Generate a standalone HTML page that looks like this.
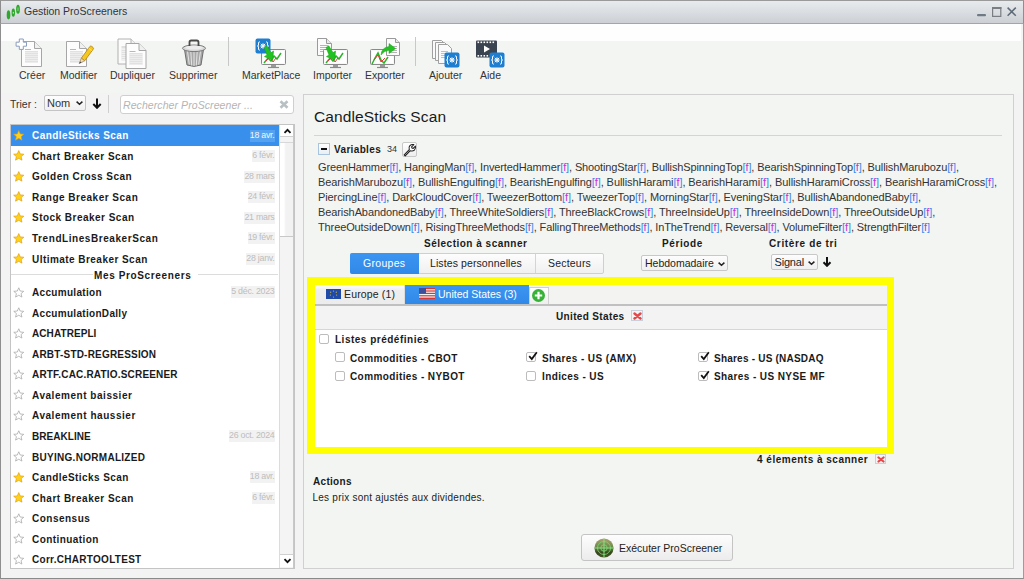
<!DOCTYPE html>
<html><head><meta charset="utf-8">
<style>
*{box-sizing:border-box;margin:0;padding:0}
html,body{width:1024px;height:579px;overflow:hidden;background:#f3f3f3;font-family:"Liberation Sans",sans-serif;color:#222}
.a{position:absolute}
.t{position:absolute;white-space:nowrap;line-height:1}
#win{position:absolute;left:0;top:0;width:1024px;height:579px;border-left:1px solid #8e8e8e;border-right:1px solid #9c9c9c;border-bottom:1px solid #8a8a8a;background:#f3f3f3}
#title{position:absolute;left:0;top:0;width:1024px;height:24px;background:linear-gradient(#e8ebee,#ccd0d4);border-top:1px solid #9a9a9a;border-bottom:1px solid #a3a6a9;border-left:1px solid #8e8e8e;border-right:1px solid #8e8e8e}
.tb{font-size:10.5px;color:#333}
.bo{font-weight:bold;letter-spacing:0.5px;font-size:10px;color:#1a1a1a}
.row{position:absolute;left:11px;width:269px;height:20.5px}
.row .n{position:absolute;left:21px;top:6.3px;font-size:10px;font-weight:bold;letter-spacing:0.4px;color:#1a1a1a;white-space:nowrap;line-height:1}
.row .d{position:absolute;right:5px;top:4.6px;height:12px;background:#f2f2f2;color:#bdbdbd;font-size:8.8px;letter-spacing:-0.25px;line-height:11.5px;padding:0 0.5px 0 0;white-space:nowrap}
.row svg{position:absolute;left:2px;top:4.8px}
.sel{background:#3990ec}
.sel .n{color:#fff}
.sel .d{background:#55a2f0;color:#f2f8fe}
.v{position:absolute;left:318px;font-size:11px;letter-spacing:-0.12px;color:#333;white-space:nowrap;line-height:1}
.f{color:#3a8af0}.f i{font-style:normal;color:#c830d8}
.cb{position:absolute;width:10px;height:10px;border:1px solid #bcbcbc;border-radius:2px;background:#fff}
.ck{position:absolute;left:1px;top:-2px}
</style></head><body>
<div id="win"></div>
<div id="title">
  <svg class="a" style="left:0px;top:0px" width="22" height="22" viewBox="0 0 22 22">
    <ellipse cx="7.5" cy="13.8" rx="1.8" ry="4.6" fill="#2ea82a"/>
    <ellipse cx="12.3" cy="11.6" rx="1.7" ry="4.2" fill="#2ea82a"/><ellipse cx="12.3" cy="11.8" rx="0.6" ry="1" fill="#cfe8cf"/>
    <ellipse cx="17" cy="8.2" rx="1.9" ry="4.5" fill="#2ea82a"/><rect x="16.4" y="6.5" width="1.2" height="3.5" fill="#7ccf7a"/>
  </svg>
  <div class="t" style="left:23px;top:4.9px;font-size:10.5px;color:#30343a">Gestion ProScreeners</div>
  <svg class="a" style="left:974px;top:4px" width="44" height="14" viewBox="0 0 44 14">
    <rect x="2" y="9" width="9" height="2.2" rx="1" fill="#6e7a86"/>
    <rect x="17.6" y="2.6" width="8.2" height="8.8" fill="none" stroke="#7a7e82" stroke-width="1.2"/><rect x="17" y="2" width="9.4" height="2" fill="#7a7e82"/>
    <path d="M32.6 2.6L40.8 10.8M40.8 2.6L32.6 10.8" stroke="#5e6a78" stroke-width="1.5"/>
  </svg>
</div>
<div class="a" style="left:1px;top:24px;width:1020px;height:17px;background:#fefefe"></div>
<div class="a" style="left:1px;top:41px;width:1022px;height:52px;background:#f3f5f2"></div>
<div class="t tb" style="left:19px;top:70px">Créer</div>
<div class="t tb" style="left:60px;top:70px">Modifier</div>
<div class="t tb" style="left:110px;top:70px">Dupliquer</div>
<div class="t tb" style="left:169px;top:70px">Supprimer</div>
<div class="t tb" style="left:242px;top:70px">MarketPlace</div>
<div class="t tb" style="left:313px;top:70px">Importer</div>
<div class="t tb" style="left:365px;top:70px">Exporter</div>
<div class="t tb" style="left:429px;top:70px">Ajouter</div>
<div class="t tb" style="left:480px;top:70px">Aide</div>
<div class="a" style="left:228px;top:37px;width:1px;height:29px;background:#c8c8c8"></div>
<div class="a" style="left:415px;top:37px;width:1px;height:29px;background:#c8c8c8"></div>
<svg class="a" style="left:0;top:30px" width="520" height="42" viewBox="0 30 520 42">
<defs>
 <g id="doc"><path d="M0.5 0.5H13.5L20.5 7.5V25.5H0.5Z" fill="#fdfdfd" stroke="#a6a6a6"/><path d="M13.5 0.5V7.5H20.5" fill="#f0f0f0" stroke="#a6a6a6"/>
  <rect x="4" y="10" width="13" height="12" fill="#d8d8d8"/><g stroke="#fff" stroke-width="0.8"><path d="M4 11.2H17M4 13.2H17M4 15.2H17M4 17.2H17M4 19.2H17M4 21.2H17"/></g><path d="M4 8.5H10" stroke="#b8b8b8"/></g>
 <g id="mon"><rect x="0.5" y="0.5" width="24" height="15" rx="1" fill="#f8f8f8" stroke="#8a8a8a"/><rect x="2" y="2" width="21" height="12" fill="#fff"/><path d="M10 16H15V18H10Z" fill="#9a9a9a"/><path d="M7 18.5H18" stroke="#8a8a8a" stroke-width="1.2"/></g>
 <g id="bx"><rect x="0" y="0" width="15" height="15" rx="2" fill="#1e7fd0"/><path d="M4.3 3.3Q3 3.3 3 4.5V6.5Q3 7.5 2 7.5Q3 7.5 3 8.5V10.5Q3 11.7 4.3 11.7M10.7 3.3Q12 3.3 12 4.5V6.5Q12 7.5 13 7.5Q12 7.5 12 8.5V10.5Q12 11.7 10.7 11.7" fill="none" stroke="#fff" stroke-width="1"/><circle cx="7.5" cy="7.5" r="2" fill="none" stroke="#fff" stroke-width="1"/><path d="M5.3 5.3L9.7 9.7M9.7 5.3L5.3 9.7" stroke="#fff" stroke-width="0.9"/></g>
</defs>
<!-- Creer -->
<use href="#doc" x="21" y="41"/>
<path d="M19.3 39H23.3V42.2H26.5V46.2H23.3V49.4H19.3V46.2H16.1V42.2H19.3Z" fill="#fff" stroke="#8a9cbc" stroke-width="1" stroke-linejoin="round"/>
<!-- Modifier -->
<use href="#doc" x="66" y="41"/>
<path d="M81.3 58.2L89.8 46.6Q90.6 45.6 91.7 46.4L93 47.4Q94 48.2 93.2 49.2L84.7 60.8Z" fill="#f6c81e" stroke="#b98a1e" stroke-width="0.9"/>
<path d="M88.6 48.2L91.9 50.6" stroke="#fbe27a" stroke-width="0.9"/>
<path d="M81.3 58.2L84.7 60.8L79.2 63.6Z" fill="#f3dcb0" stroke="#a08050" stroke-width="0.7" stroke-linejoin="round"/>
<path d="M79.2 63.6L80.2 61.6L81.3 62.4Z" fill="#333"/>
<!-- Dupliquer -->
<g opacity="0.85"><use href="#doc" x="117.5" y="38.5"/></g>
<use href="#doc" x="125.5" y="43"/>
<!-- Supprimer -->
<path d="M184.5 49.5L187 65Q194 67.8 201 65L203.5 49.5Z" fill="#a8a8a8" stroke="#6e6e6e"/>
<g stroke="#e4e4e4" stroke-width="1"><path d="M187.5 51L189.3 64.5M190.8 51.5L191.7 65.5M194 51.5V66M197.2 51.5L196.3 65.5M200.5 51L198.7 64.5"/></g>
<ellipse cx="194" cy="48.3" rx="11.5" ry="3.3" fill="#d8d8d8" stroke="#7a7a7a"/>
<ellipse cx="194" cy="47.6" rx="9" ry="2" fill="#ececec"/>
<path d="M189.5 46V42.2Q189.5 40.5 191.2 40.5H196.8Q198.5 40.5 198.5 42.2V46" fill="none" stroke="#4a4a4a" stroke-width="1.8"/>
<!-- MarketPlace -->
<use href="#mon" x="261" y="49"/>
<path d="M264 63L268 58L271 61L274 56L277 59L281 53" fill="none" stroke="#27b427" stroke-width="1.5"/>
<path d="M266 61L270 57L273 62L276 58" fill="none" stroke="#e03a3a" stroke-width="1"/>
<use href="#bx" x="255.5" y="38.5"/>
<path d="M264 47.5L266.8 45.8L271 52.6L273.6 51L272.6 60.2L264.4 56.6L267 55Z" fill="#22c222" stroke="#18a018" stroke-width="0.5"/>
<!-- Importer -->
<path d="M317.5 38.5H326.5L331.5 43.5V55.5H317.5Z" fill="#fbfbfb" stroke="#9a9a9a"/><path d="M326.5 38.5V43.5H331.5" fill="#e8e8e8" stroke="#9a9a9a"/>
<g stroke="#b4b4b4"><path d="M320 45.5H328M320 47.5H328M320 49.5H328M320 51.5H328"/></g>
<use href="#mon" x="323" y="49"/>
<path d="M326 63L330 58L333 61L336 56L339 59L343 53" fill="none" stroke="#27b427" stroke-width="1.5"/>
<path d="M328 61L332 57L335 62L338 58" fill="none" stroke="#e03a3a" stroke-width="1"/>
<path d="M326 47.5L328.8 45.8L333 52.6L335.6 51L334.6 60.2L326.4 56.6L329 55Z" fill="#22c222" stroke="#18a018" stroke-width="0.5"/>
<!-- Exporter -->
<use href="#mon" x="370" y="49"/>
<path d="M372 64L375 58L378 53L381 60L384 63L388 57" fill="none" stroke="#27b427" stroke-width="1.5"/>
<path d="M374 60L378 55L381 62L385 58" fill="none" stroke="#e03a3a" stroke-width="1"/>
<path d="M386.5 38.5H395.5L399.5 42.5V55.5H386.5Z" fill="#fbfbfb" stroke="#9a9a9a"/><path d="M395.5 38.5V42.5H399.5" fill="#e8e8e8" stroke="#9a9a9a"/>
<g stroke="#b4b4b4"><path d="M389 46.5H397M389 48.5H397M389 50.5H397M389 52.5H397"/></g>
<path d="M381 55Q381.5 47.5 389 46.5V43.5L395.5 48.5L389 53.5V50.2Q384.5 50.5 381 55Z" fill="#22c222" stroke="#18a018" stroke-width="0.5"/>
<!-- Ajouter -->
<path d="M432.5 40.5H441.5L444.5 43.5V58.5H432.5Z" fill="#fafafa" stroke="#a0a0a0"/>
<path d="M435.5 42.5H444.5L447.5 45.5V60.5H435.5Z" fill="#fafafa" stroke="#a0a0a0"/>
<path d="M438.5 44.5H447.5L451.5 48.5V63.5H438.5Z" fill="#fafafa" stroke="#a0a0a0"/>
<g stroke="#c0c0c0"><path d="M441 51.5H448M441 53.5H448M441 55.5H448M441 57.5H448"/></g>
<use href="#bx" x="444.5" y="52.5"/>
<!-- Aide -->
<rect x="476" y="40.5" width="21" height="17" rx="1" fill="#394450"/>
<g fill="#fff"><rect x="477.5" y="41.5" width="1.6" height="1.6"/><rect x="480.5" y="41.5" width="1.6" height="1.6"/><rect x="483.5" y="41.5" width="1.6" height="1.6"/><rect x="486.5" y="41.5" width="1.6" height="1.6"/><rect x="489.5" y="41.5" width="1.6" height="1.6"/><rect x="492.5" y="41.5" width="1.6" height="1.6"/>
<rect x="477.5" y="55" width="1.6" height="1.6"/><rect x="480.5" y="55" width="1.6" height="1.6"/><rect x="483.5" y="55" width="1.6" height="1.6"/><rect x="486.5" y="55" width="1.6" height="1.6"/></g>
<path d="M484 45.5V52.5L490 49Z" fill="#fff"/>
<use href="#bx" x="489.5" y="52.5"/>
</svg>
<div class="t" style="left:10px;top:99px;font-size:10.5px;color:#333">Trier :</div>
<div class="a" style="left:44px;top:95px;width:42px;height:16px;border:1px solid #c4c4c4;border-radius:2px;background:linear-gradient(#fdfdfd,#f0f0f0)"></div>
<div class="t" style="left:47px;top:98px;font-size:11px;color:#333">Nom</div>
<svg class="a" style="left:75px;top:100px" width="9" height="6" viewBox="0 0 9 6"><path d="M1.6 1.6L4.5 4.3L7.4 1.6" fill="none" stroke="#222" stroke-width="1.5"/></svg>
<svg class="a" style="left:92px;top:98px" width="10" height="11" viewBox="0 0 10 11"><path d="M5 0.5V9.5M1.3 6L5 9.8L8.7 6" fill="none" stroke="#111" stroke-width="2"/></svg>
<div class="a" style="left:108px;top:95px;width:1px;height:18px;background:#cfcfcf"></div>
<div class="a" style="left:120px;top:95px;width:174px;height:19px;border:1px solid #cfcfcf;border-radius:3px;background:#fff"></div>
<div class="t" style="left:123px;top:99.5px;font-size:10.5px;letter-spacing:0.08px;font-style:italic;color:#b4b4b4">Rechercher ProScreener ...</div>
<svg class="a" style="left:279px;top:100px" width="10" height="9" viewBox="0 0 10 9"><path d="M1.5 1.2L8.5 7.8M8.5 1.2L1.5 7.8" stroke="#b8c0c4" stroke-width="2.6"/></svg>
<div class="a" style="left:10px;top:124px;width:285px;height:445px;border:1px solid #c4c4c4;background:#fff;overflow:hidden"></div>
<div class="row sel" style="top:125.00px"><svg width="11.5" height="11.5" viewBox="0 0 12 12"><path d="M6 0.6L7.55 4.1L11.3 4.4L8.5 6.9L9.35 10.6L6 8.7L2.65 10.6L3.5 6.9L0.7 4.4L4.45 4.1Z" fill="#ffd21a" stroke="#e09a10" stroke-width="0.7" stroke-linejoin="round"/></svg><div class="n" style="letter-spacing:0.437px">CandleSticks Scan</div><div class="d">18 avr.</div></div>
<div class="row" style="top:145.55px"><svg width="11.5" height="11.5" viewBox="0 0 12 12"><path d="M6 0.6L7.55 4.1L11.3 4.4L8.5 6.9L9.35 10.6L6 8.7L2.65 10.6L3.5 6.9L0.7 4.4L4.45 4.1Z" fill="#ffd21a" stroke="#e09a10" stroke-width="0.7" stroke-linejoin="round"/></svg><div class="n" style="letter-spacing:0.500px">Chart Breaker Scan</div><div class="d">6 févr.</div></div>
<div class="row" style="top:166.10px"><svg width="11.5" height="11.5" viewBox="0 0 12 12"><path d="M6 0.6L7.55 4.1L11.3 4.4L8.5 6.9L9.35 10.6L6 8.7L2.65 10.6L3.5 6.9L0.7 4.4L4.45 4.1Z" fill="#ffd21a" stroke="#e09a10" stroke-width="0.7" stroke-linejoin="round"/></svg><div class="n" style="letter-spacing:0.463px">Golden Cross Scan</div><div class="d">28 mars</div></div>
<div class="row" style="top:186.65px"><svg width="11.5" height="11.5" viewBox="0 0 12 12"><path d="M6 0.6L7.55 4.1L11.3 4.4L8.5 6.9L9.35 10.6L6 8.7L2.65 10.6L3.5 6.9L0.7 4.4L4.45 4.1Z" fill="#ffd21a" stroke="#e09a10" stroke-width="0.7" stroke-linejoin="round"/></svg><div class="n" style="letter-spacing:0.500px">Range Breaker Scan</div><div class="d">24 févr.</div></div>
<div class="row" style="top:207.20px"><svg width="11.5" height="11.5" viewBox="0 0 12 12"><path d="M6 0.6L7.55 4.1L11.3 4.4L8.5 6.9L9.35 10.6L6 8.7L2.65 10.6L3.5 6.9L0.7 4.4L4.45 4.1Z" fill="#ffd21a" stroke="#e09a10" stroke-width="0.7" stroke-linejoin="round"/></svg><div class="n" style="letter-spacing:0.476px">Stock Breaker Scan</div><div class="d">21 mars</div></div>
<div class="row" style="top:227.75px"><svg width="11.5" height="11.5" viewBox="0 0 12 12"><path d="M6 0.6L7.55 4.1L11.3 4.4L8.5 6.9L9.35 10.6L6 8.7L2.65 10.6L3.5 6.9L0.7 4.4L4.45 4.1Z" fill="#ffd21a" stroke="#e09a10" stroke-width="0.7" stroke-linejoin="round"/></svg><div class="n" style="letter-spacing:0.565px">TrendLinesBreakerScan</div><div class="d">19 févr.</div></div>
<div class="row" style="top:248.30px"><svg width="11.5" height="11.5" viewBox="0 0 12 12"><path d="M6 0.6L7.55 4.1L11.3 4.4L8.5 6.9L9.35 10.6L6 8.7L2.65 10.6L3.5 6.9L0.7 4.4L4.45 4.1Z" fill="#ffd21a" stroke="#e09a10" stroke-width="0.7" stroke-linejoin="round"/></svg><div class="n" style="letter-spacing:0.455px">Ultimate Breaker Scan</div><div class="d">28 janv.</div></div>
<div class="a" style="left:11px;top:273.85px;width:82px;height:1px;background:#dcdcdc"></div><div class="a" style="left:198px;top:273.85px;width:80px;height:1px;background:#dcdcdc"></div><div class="t bo" style="left:94px;top:271.35px;letter-spacing:0.63px">Mes ProScreeners</div>
<div class="row" style="top:281.85px"><svg width="11.5" height="11.5" viewBox="0 0 12 12"><path d="M6 0.8L7.5 4.2L11.2 4.5L8.4 6.9L9.3 10.5L6 8.6L2.7 10.5L3.6 6.9L0.8 4.5L4.5 4.2Z" fill="#fff" stroke="#a8a8a8" stroke-width="0.8" stroke-linejoin="round"/></svg><div class="n" style="letter-spacing:0.318px">Accumulation</div><div class="d">5 déc. 2023</div></div>
<div class="row" style="top:302.40px"><svg width="11.5" height="11.5" viewBox="0 0 12 12"><path d="M6 0.8L7.5 4.2L11.2 4.5L8.4 6.9L9.3 10.5L6 8.6L2.7 10.5L3.6 6.9L0.8 4.5L4.5 4.2Z" fill="#fff" stroke="#a8a8a8" stroke-width="0.8" stroke-linejoin="round"/></svg><div class="n" style="letter-spacing:0.312px">AccumulationDally</div></div>
<div class="row" style="top:322.95px"><svg width="11.5" height="11.5" viewBox="0 0 12 12"><path d="M6 0.8L7.5 4.2L11.2 4.5L8.4 6.9L9.3 10.5L6 8.6L2.7 10.5L3.6 6.9L0.8 4.5L4.5 4.2Z" fill="#fff" stroke="#a8a8a8" stroke-width="0.8" stroke-linejoin="round"/></svg><div class="n" style="letter-spacing:0.078px">ACHATREPLI</div></div>
<div class="row" style="top:343.50px"><svg width="11.5" height="11.5" viewBox="0 0 12 12"><path d="M6 0.8L7.5 4.2L11.2 4.5L8.4 6.9L9.3 10.5L6 8.6L2.7 10.5L3.6 6.9L0.8 4.5L4.5 4.2Z" fill="#fff" stroke="#a8a8a8" stroke-width="0.8" stroke-linejoin="round"/></svg><div class="n" style="letter-spacing:0.194px">ARBT-STD-REGRESSION</div></div>
<div class="row" style="top:364.05px"><svg width="11.5" height="11.5" viewBox="0 0 12 12"><path d="M6 0.8L7.5 4.2L11.2 4.5L8.4 6.9L9.3 10.5L6 8.6L2.7 10.5L3.6 6.9L0.8 4.5L4.5 4.2Z" fill="#fff" stroke="#a8a8a8" stroke-width="0.8" stroke-linejoin="round"/></svg><div class="n" style="letter-spacing:0.186px">ARTF.CAC.RATIO.SCREENER</div></div>
<div class="row" style="top:384.60px"><svg width="11.5" height="11.5" viewBox="0 0 12 12"><path d="M6 0.8L7.5 4.2L11.2 4.5L8.4 6.9L9.3 10.5L6 8.6L2.7 10.5L3.6 6.9L0.8 4.5L4.5 4.2Z" fill="#fff" stroke="#a8a8a8" stroke-width="0.8" stroke-linejoin="round"/></svg><div class="n" style="letter-spacing:0.535px">Avalement baissier</div></div>
<div class="row" style="top:405.15px"><svg width="11.5" height="11.5" viewBox="0 0 12 12"><path d="M6 0.8L7.5 4.2L11.2 4.5L8.4 6.9L9.3 10.5L6 8.6L2.7 10.5L3.6 6.9L0.8 4.5L4.5 4.2Z" fill="#fff" stroke="#a8a8a8" stroke-width="0.8" stroke-linejoin="round"/></svg><div class="n" style="letter-spacing:0.541px">Avalement haussier</div></div>
<div class="row" style="top:425.70px"><svg width="11.5" height="11.5" viewBox="0 0 12 12"><path d="M6 0.8L7.5 4.2L11.2 4.5L8.4 6.9L9.3 10.5L6 8.6L2.7 10.5L3.6 6.9L0.8 4.5L4.5 4.2Z" fill="#fff" stroke="#a8a8a8" stroke-width="0.8" stroke-linejoin="round"/></svg><div class="n" style="letter-spacing:0.050px">BREAKLINE</div><div class="d">26 oct. 2024</div></div>
<div class="row" style="top:446.25px"><svg width="11.5" height="11.5" viewBox="0 0 12 12"><path d="M6 0.8L7.5 4.2L11.2 4.5L8.4 6.9L9.3 10.5L6 8.6L2.7 10.5L3.6 6.9L0.8 4.5L4.5 4.2Z" fill="#fff" stroke="#a8a8a8" stroke-width="0.8" stroke-linejoin="round"/></svg><div class="n" style="letter-spacing:0.287px">BUYING.NORMALIZED</div></div>
<div class="row" style="top:466.80px"><svg width="11.5" height="11.5" viewBox="0 0 12 12"><path d="M6 0.6L7.55 4.1L11.3 4.4L8.5 6.9L9.35 10.6L6 8.7L2.65 10.6L3.5 6.9L0.7 4.4L4.45 4.1Z" fill="#ffd21a" stroke="#e09a10" stroke-width="0.7" stroke-linejoin="round"/></svg><div class="n" style="letter-spacing:0.437px">CandleSticks Scan</div><div class="d">18 avr.</div></div>
<div class="row" style="top:487.35px"><svg width="11.5" height="11.5" viewBox="0 0 12 12"><path d="M6 0.6L7.55 4.1L11.3 4.4L8.5 6.9L9.35 10.6L6 8.7L2.65 10.6L3.5 6.9L0.7 4.4L4.45 4.1Z" fill="#ffd21a" stroke="#e09a10" stroke-width="0.7" stroke-linejoin="round"/></svg><div class="n" style="letter-spacing:0.500px">Chart Breaker Scan</div><div class="d">6 févr.</div></div>
<div class="row" style="top:507.90px"><svg width="11.5" height="11.5" viewBox="0 0 12 12"><path d="M6 0.8L7.5 4.2L11.2 4.5L8.4 6.9L9.3 10.5L6 8.6L2.7 10.5L3.6 6.9L0.8 4.5L4.5 4.2Z" fill="#fff" stroke="#a8a8a8" stroke-width="0.8" stroke-linejoin="round"/></svg><div class="n" style="letter-spacing:0.488px">Consensus</div></div>
<div class="row" style="top:528.45px"><svg width="11.5" height="11.5" viewBox="0 0 12 12"><path d="M6 0.8L7.5 4.2L11.2 4.5L8.4 6.9L9.3 10.5L6 8.6L2.7 10.5L3.6 6.9L0.8 4.5L4.5 4.2Z" fill="#fff" stroke="#a8a8a8" stroke-width="0.8" stroke-linejoin="round"/></svg><div class="n" style="letter-spacing:0.436px">Continuation</div></div>
<div class="row" style="top:549.00px"><svg width="11.5" height="11.5" viewBox="0 0 12 12"><path d="M6 0.8L7.5 4.2L11.2 4.5L8.4 6.9L9.3 10.5L6 8.6L2.7 10.5L3.6 6.9L0.8 4.5L4.5 4.2Z" fill="#fff" stroke="#a8a8a8" stroke-width="0.8" stroke-linejoin="round"/></svg><div class="n" style="letter-spacing:0.287px">Corr.CHARTOOLTEST</div></div>
<div class="a" style="left:279px;top:125px;width:15px;height:443px;background:#f4f4f4;border-left:1px solid #dcdcdc;border-right:1px solid #c8c8c8"></div>
<div class="a" style="left:280px;top:125px;width:13px;height:12px;background:#fff;border-bottom:1px solid #d0d0d0"></div>
<svg class="a" style="left:283px;top:128px" width="9" height="6" viewBox="0 0 9 6"><path d="M1.5 4.8L4.5 1.8L7.5 4.8" fill="none" stroke="#111" stroke-width="1.8"/></svg>
<div class="a" style="left:280px;top:142px;width:13px;height:95px;background:linear-gradient(90deg,#fff 30%,#f2f2f2 45%);border-top:1px solid #d8d8d8;border-bottom:1px solid #c8c8c8"></div>
<div class="a" style="left:280px;top:554px;width:13px;height:13px;background:#fff;border-top:1px solid #d0d0d0"></div>
<svg class="a" style="left:283px;top:558px" width="9" height="6" viewBox="0 0 9 6"><path d="M1.5 1.2L4.5 4.2L7.5 1.2" fill="none" stroke="#111" stroke-width="1.8"/></svg>
<div class="a" style="left:303px;top:94px;width:711px;height:475px;border:1px solid #d0d0d0;background:#f3f5f2"></div>
<div class="t" style="left:314px;top:108.5px;font-size:15.5px;letter-spacing:0.12px;color:#1a1a1a">CandleSticks Scan</div>
<div class="a" style="left:314px;top:135px;width:688px;height:1px;background:#d4d4d4"></div>
<!-- variables header -->
<div class="a" style="left:318px;top:143px;width:12px;height:12px;border:1px solid #a9c4de;background:linear-gradient(#fff,#e8eef4)"></div>
<div class="a" style="left:321px;top:148px;width:6px;height:2px;background:#111"></div>
<div class="t bo" style="left:334px;top:144.5px;letter-spacing:0.35px">Variables</div>
<div class="t" style="left:387px;top:145px;font-size:9px;color:#333">34</div>
<div class="a" style="left:402px;top:142px;width:15px;height:15px;border:1px solid #c8c8c8;border-radius:2px;background:linear-gradient(#fff,#eee)"></div>
<svg class="a" style="left:403px;top:143px" width="14" height="14" viewBox="0 0 14 14"><path d="M2.2 12.8L1.2 11.8L6.3 6.7Q5.4 4.3 6.9 2.6Q8.5 1 10.8 1.6L8.6 3.8L9 5L10.2 5.4L12.4 3.2Q13 5.5 11.4 7.1Q9.7 8.6 7.3 7.7Z" fill="#fff" stroke="#222" stroke-width="1.1" stroke-linejoin="round"/></svg>
<!-- variables text -->
<div class="v" style="letter-spacing:-0.12px;top:162.4px">GreenHammer<span class="f">[<i>f</i>]</span>, HangingMan<span class="f">[<i>f</i>]</span>, InvertedHammer<span class="f">[<i>f</i>]</span>, ShootingStar<span class="f">[<i>f</i>]</span>, BullishSpinningTop<span class="f">[<i>f</i>]</span>, BearishSpinningTop<span class="f">[<i>f</i>]</span>, BullishMarubozu<span class="f">[<i>f</i>]</span>,</div>
<div class="v" style="letter-spacing:-0.08px;top:177.2px">BearishMarubozu<span class="f">[<i>f</i>]</span>, BullishEngulfing<span class="f">[<i>f</i>]</span>, BearishEngulfing<span class="f">[<i>f</i>]</span>, BullishHarami<span class="f">[<i>f</i>]</span>, BearishHarami<span class="f">[<i>f</i>]</span>, BullishHaramiCross<span class="f">[<i>f</i>]</span>, BearishHaramiCross<span class="f">[<i>f</i>]</span>,</div>
<div class="v" style="letter-spacing:-0.095px;top:192px">PiercingLine<span class="f">[<i>f</i>]</span>, DarkCloudCover<span class="f">[<i>f</i>]</span>, TweezerBottom<span class="f">[<i>f</i>]</span>, TweezerTop<span class="f">[<i>f</i>]</span>, MorningStar<span class="f">[<i>f</i>]</span>, EveningStar<span class="f">[<i>f</i>]</span>, BullishAbandonedBaby<span class="f">[<i>f</i>]</span>,</div>
<div class="v" style="letter-spacing:-0.095px;top:206.8px">BearishAbandonedBaby<span class="f">[<i>f</i>]</span>, ThreeWhiteSoldiers<span class="f">[<i>f</i>]</span>, ThreeBlackCrows<span class="f">[<i>f</i>]</span>, ThreeInsideUp<span class="f">[<i>f</i>]</span>, ThreeInsideDown<span class="f">[<i>f</i>]</span>, ThreeOutsideUp<span class="f">[<i>f</i>]</span>,</div>
<div class="v" style="letter-spacing:-0.12px;top:221.6px">ThreeOutsideDown<span class="f">[<i>f</i>]</span>, RisingThreeMethods<span class="f">[<i>f</i>]</span>, FallingThreeMethods<span class="f">[<i>f</i>]</span>, InTheTrend<span class="f">[<i>f</i>]</span>, Reversal<span class="f">[<i>f</i>]</span>, VolumeFilter<span class="f">[<i>f</i>]</span>, StrengthFilter<span class="f">[<i>f</i>]</span></div>
<!-- selection -->
<div class="t bo" style="left:424px;top:239px">Sélection à scanner</div>
<div class="t bo" style="left:662px;top:239px;letter-spacing:0.6px">Période</div>
<div class="t bo" style="left:769px;top:239px;letter-spacing:0.64px">Critère de tri</div>
<div class="a" style="left:350px;top:253px;width:254px;height:21px;border:1px solid #cfcfcf;border-radius:2px;background:linear-gradient(#fdfdfd,#f0f0f0)"></div>
<div class="a" style="left:350px;top:253px;width:69px;height:21px;border-radius:2px 0 0 2px;background:linear-gradient(#3c95f0,#3089e8)"></div>
<div class="a" style="left:535px;top:254px;width:1px;height:19px;background:#d4d4d4"></div>
<div class="t" style="left:363px;top:257.5px;font-size:10.5px;letter-spacing:0.3px;color:#fff">Groupes</div>
<div class="t" style="left:430px;top:257.5px;font-size:10.5px;letter-spacing:0.1px;color:#222">Listes personnelles</div>
<div class="t" style="left:548px;top:257.5px;font-size:10.5px;letter-spacing:0.2px;color:#222">Secteurs</div>
<div class="a" style="left:641px;top:255px;width:87px;height:16px;border:1px solid #c8c8c8;border-radius:2px;background:linear-gradient(#fdfdfd,#f0f0f0)"></div>
<div class="t" style="left:645px;top:258px;font-size:10.5px;color:#222">Hebdomadaire</div>
<svg class="a" style="left:717px;top:261px" width="9" height="6" viewBox="0 0 9 6"><path d="M1.6 1.6L4.5 4.3L7.4 1.6" fill="none" stroke="#222" stroke-width="1.5"/></svg>
<div class="a" style="left:771px;top:254px;width:47px;height:16px;border:1px solid #c8c8c8;border-radius:2px;background:linear-gradient(#fdfdfd,#f0f0f0)"></div>
<div class="t" style="left:774.5px;top:257px;font-size:11px;letter-spacing:-0.2px;color:#222">Signal</div>
<svg class="a" style="left:807px;top:260px" width="9" height="6" viewBox="0 0 9 6"><path d="M1.6 1.6L4.5 4.3L7.4 1.6" fill="none" stroke="#222" stroke-width="1.5"/></svg>
<svg class="a" style="left:822px;top:257px" width="10" height="10" viewBox="0 0 10 10"><path d="M5 0V8.5M1.5 5.3L5 8.8L8.5 5.3" fill="none" stroke="#111" stroke-width="2"/></svg>
<!-- yellow box -->
<div class="a" style="left:307px;top:277px;width:587px;height:177px;border:8px solid #ffff00;border-right-width:7px;border-bottom-width:7px;background:#fff"></div>
<div class="a" style="left:315px;top:285px;width:572px;height:19px;background:#f3f4f2"></div>
<div class="a" style="left:315px;top:285px;width:90px;height:19px;background:linear-gradient(#fdfdfd,#eeeeee 30%,#ececec);border-right:1px solid #dcdcdc"></div>
<div class="a" style="left:405px;top:285px;width:124px;height:19px;background:linear-gradient(#3c95f0,#3089e8)"></div>
<div class="a" style="left:529px;top:287px;width:20px;height:17px;background:linear-gradient(#fff,#eee);border:1px solid #d0d0d0;border-bottom:none"></div>
<svg class="a" style="left:531px;top:288px" width="15" height="15" viewBox="0 0 15 15"><circle cx="7.5" cy="7.5" r="6.5" fill="#36b236"/><path d="M7.5 3.8V11.2M3.8 7.5H11.2" stroke="#fff" stroke-width="2.2"/></svg>
<div class="a" style="left:315px;top:304px;width:572px;height:2px;background:#c0c0c0"></div>
<div class="a" style="left:315px;top:306px;width:572px;height:23.5px;background:#f3f3f3;border-bottom:1px solid #d6d6d6"></div>
<!-- flags -->
<svg class="a" style="left:326px;top:289px" width="15" height="10" viewBox="0 0 15 10"><rect width="15" height="10" fill="#1f4aa8"/><g fill="#d9c040"><circle cx="7.5" cy="2" r="0.6"/><circle cx="10.3" cy="3.2" r="0.6"/><circle cx="10.6" cy="6" r="0.6"/><circle cx="7.5" cy="8" r="0.6"/><circle cx="4.4" cy="6" r="0.6"/><circle cx="4.7" cy="3.2" r="0.6"/></g></svg>
<div class="t" style="left:344px;top:289px;font-size:10.5px;letter-spacing:0.15px;color:#222">Europe (1)</div>
<svg class="a" style="left:419px;top:288px" width="16" height="11" viewBox="0 0 16 11"><rect width="16" height="11" fill="#f4f4f4"/><g fill="#d23a3a"><rect y="0" width="16" height="1.2"/><rect y="2.4" width="16" height="1.2"/><rect y="4.8" width="16" height="1.2"/><rect y="7.2" width="16" height="1.2"/><rect y="9.6" width="16" height="1.4"/></g><rect width="7" height="5.5" fill="#3b4f9a"/></svg>
<div class="t" style="left:438px;top:289px;font-size:10.5px;color:#fff">United States (3)</div>
<div class="t bo" style="left:556px;top:312px;letter-spacing:0.35px">United States</div>
<div class="a" style="left:631px;top:310px;width:12px;height:11px;border:1px solid #c8d0dc;background:#f4f4f4"></div>
<svg class="a" style="left:632.5px;top:311.5px" width="9" height="8" viewBox="0 0 9 8"><path d="M1.5 1.5L7.5 6.5M7.5 1.5L1.5 6.5" stroke="#e5484a" stroke-width="2.4" stroke-linecap="round"/></svg>
<!-- checkboxes -->
<div class="cb" style="left:319px;top:333.5px"></div>
<div class="t bo" style="left:335px;top:334.5px">Listes prédéfinies</div>
<div class="cb" style="left:335px;top:352px"></div>
<div class="t bo" style="left:350px;top:353.7px;letter-spacing:0.4px">Commodities - CBOT</div>
<div class="cb" style="left:335px;top:371px"></div>
<div class="t bo" style="left:350px;top:372.3px;letter-spacing:0.4px">Commodities - NYBOT</div>
<div class="cb" style="left:526px;top:352px"><svg class="ck" width="10" height="10" viewBox="0 0 10 10"><path d="M1.2 5.2L3.8 8L8.8 1.2" fill="none" stroke="#111" stroke-width="1.8"/></svg></div>
<div class="t bo" style="left:542px;top:353.7px;letter-spacing:0.4px">Shares - US (AMX)</div>
<div class="cb" style="left:526px;top:371px"></div>
<div class="t bo" style="left:542px;top:372.3px;letter-spacing:0.4px">Indices - US</div>
<div class="cb" style="left:698px;top:352px"><svg class="ck" width="10" height="10" viewBox="0 0 10 10"><path d="M1.2 5.2L3.8 8L8.8 1.2" fill="none" stroke="#111" stroke-width="1.8"/></svg></div>
<div class="t bo" style="left:714px;top:353.7px;letter-spacing:0.22px">Shares - US (NASDAQ</div>
<div class="cb" style="left:698px;top:371px"><svg class="ck" width="10" height="10" viewBox="0 0 10 10"><path d="M1.2 5.2L3.8 8L8.8 1.2" fill="none" stroke="#111" stroke-width="1.8"/></svg></div>
<div class="t bo" style="left:714px;top:372.3px;letter-spacing:0.4px">Shares - US NYSE MF</div>
<!-- below -->
<div class="t bo" style="left:757px;top:454.8px">4 élements à scanner</div>
<div class="a" style="left:875px;top:454px;width:11px;height:10px;border:1px solid #c8d0dc;background:#f4f4f4"></div>
<svg class="a" style="left:876.5px;top:455.5px" width="8" height="7" viewBox="0 0 8 7"><path d="M1.5 1.5L6.5 5.5M6.5 1.5L1.5 5.5" stroke="#e5484a" stroke-width="2.2" stroke-linecap="round"/></svg>
<div class="t bo" style="left:313px;top:476.5px;letter-spacing:0.3px">Actions</div>
<div class="t" style="left:312.5px;top:492.8px;font-size:10px;letter-spacing:0.24px;color:#222">Les prix sont ajustés aux dividendes.</div>
<div class="a" style="left:581px;top:534px;width:152px;height:27px;border:1px solid #c4c4c4;border-radius:3px;background:linear-gradient(#fdfdfd,#ececec)"></div>
<svg class="a" style="left:594px;top:538px" width="20" height="20" viewBox="0 0 20 20"><defs><linearGradient id="rg" x1="0" y1="0" x2="0" y2="1"><stop offset="0" stop-color="#b0a070"/><stop offset="0.45" stop-color="#6a8a48"/><stop offset="0.75" stop-color="#34461a"/><stop offset="1" stop-color="#4a5a28"/></linearGradient></defs><circle cx="10" cy="10" r="9.6" fill="url(#rg)"/><circle cx="10" cy="10" r="6.5" fill="none" stroke="#78d070" stroke-width="0.9"/><circle cx="10" cy="10" r="3.2" fill="none" stroke="#78d070" stroke-width="0.9"/><path d="M0.5 10H19.5M10 0.5V19.5" stroke="#88e080" stroke-width="1"/></svg>
<div class="t" style="left:619px;top:543.3px;font-size:10.5px;color:#222">Exécuter ProScreener</div>
</body></html>
